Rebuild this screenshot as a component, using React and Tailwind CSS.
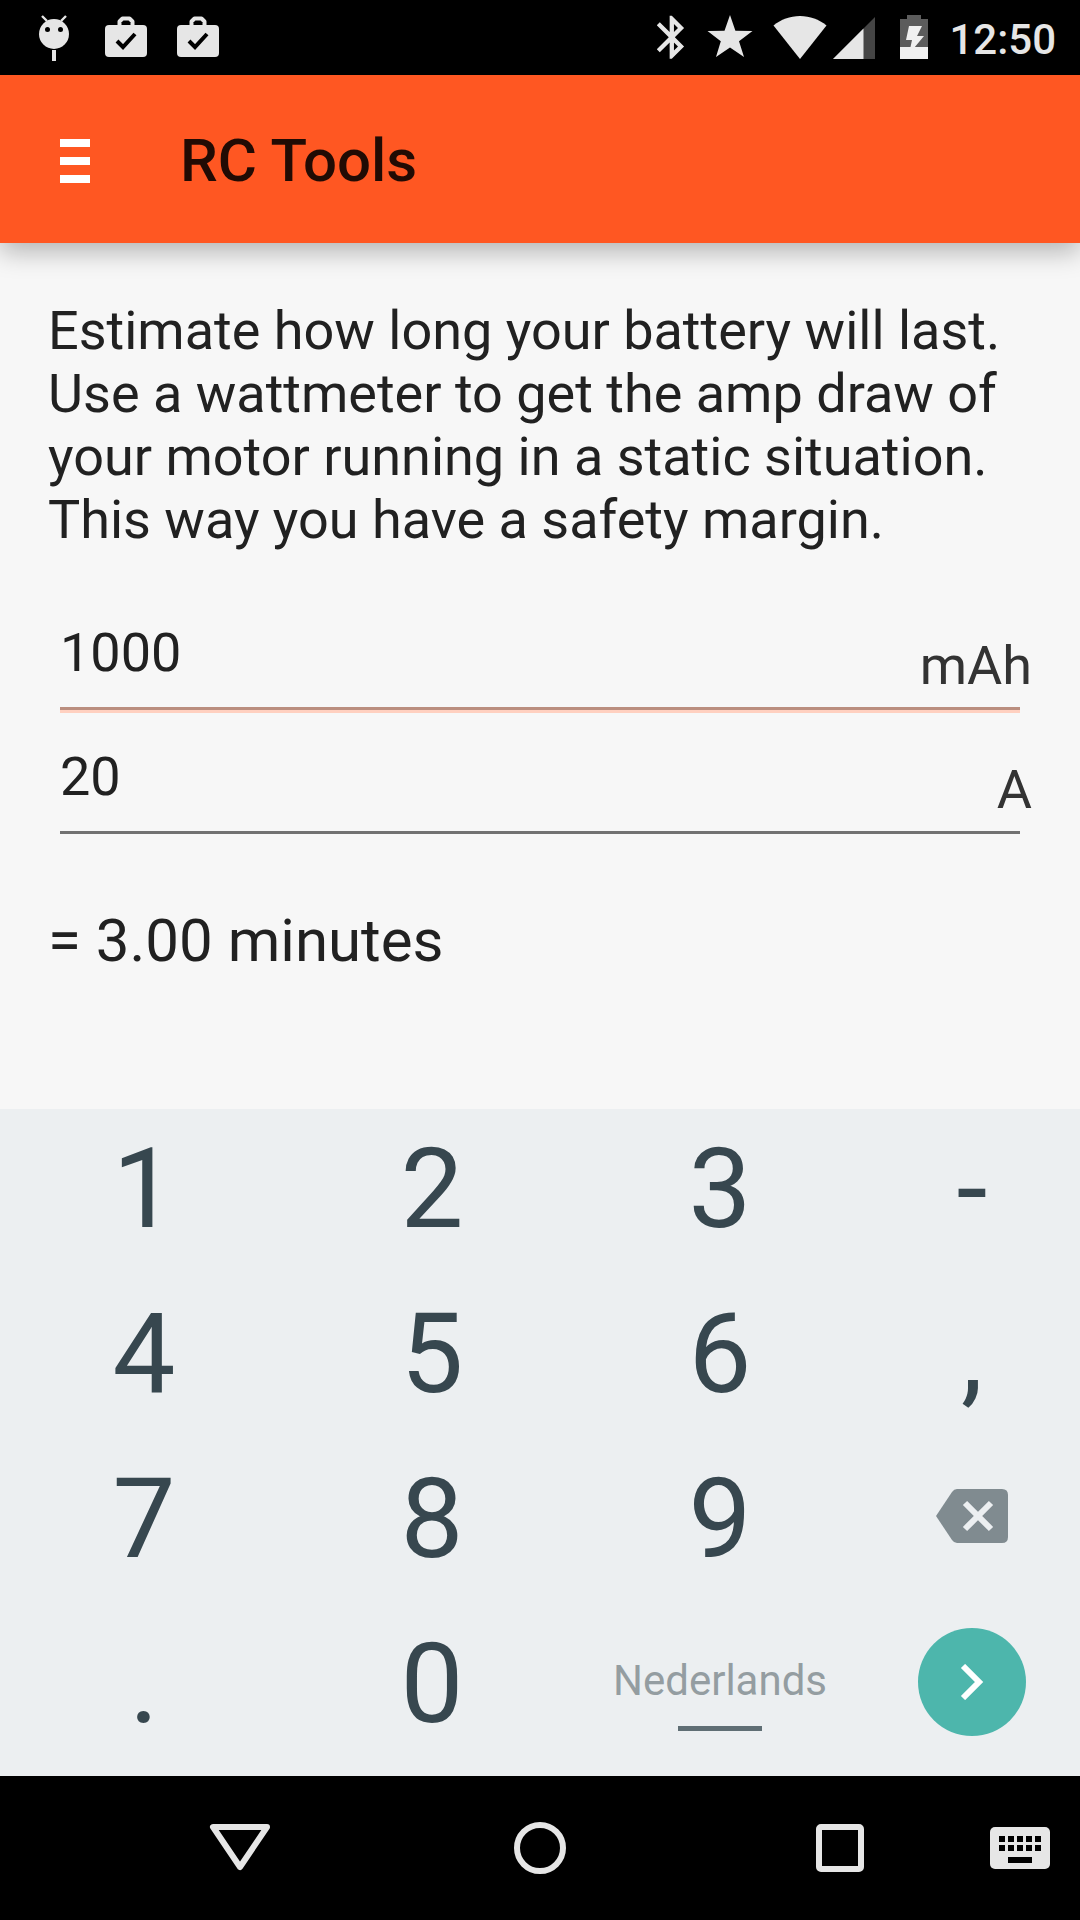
import { useState } from "react";

function AndroidIcon() {
  return (
    <svg width="72" height="75" viewBox="0 0 72 75" fill="#e6e6e6" aria-hidden="true">
      <circle cx="36" cy="34" r="15" />
      <path d="M24 16l5 5M48 16l-5 5" stroke="#e6e6e6" strokeWidth="2.4" />
      <rect x="34" y="50" width="4" height="11" />
      <circle cx="29.5" cy="29.5" r="2.5" fill="#000" />
      <circle cx="42.5" cy="29.5" r="2.5" fill="#000" />
    </svg>
  );
}

function UpdateIcon() {
  return (
    <svg width="72" height="75" viewBox="0 0 72 75" aria-hidden="true">
      <path d="M29.500 26V21.500L32.500 18.500H39.500L42.500 21.500V26" fill="none" stroke="#e6e6e6" strokeWidth="4" strokeLinejoin="round" />
      <rect x="15" y="25" width="42" height="32" rx="4" fill="#e6e6e6" />
      <path d="M27 41l6 6L45 34" fill="none" stroke="#000" strokeWidth="4" />
    </svg>
  );
}

function BluetoothIcon() {
  return (
    <svg width="30" height="75" viewBox="0 0 30 75" aria-hidden="true">
      <path
        transform="translate(-11 11.5) scale(2.15)"
        fill="#e6e6e6"
        d="M17.71 7.71L12 2h-1v7.59L6.410 5 5 6.410 10.590 12 5 17.590 6.410 19 11 14.410V22h1l5.710-5.710-4.300-4.290 4.300-4.290zM13 5.830l1.880 1.880L13 9.590V5.830zm1.880 10.460L13 18.170v-3.760l1.880 1.880z"
      />
    </svg>
  );
}

function StarIcon() {
  return (
    <svg width="46" height="75" viewBox="0 0 46 75" aria-hidden="true">
      <path d="M23 15l5.400 15.800 17.100.2-13.500 10.200L37 57 23 47.500 9 57l4.800-15.800L.500 31l17-.2z" fill="#e6e6e6" />
    </svg>
  );
}

function WifiIcon() {
  return (
    <svg width="54" height="75" viewBox="0 0 54 75" aria-hidden="true">
      <path d="M27 59L.500 25.500C8 19.500 17 16 27 16s19 3.500 26.500 9.500z" fill="#e6e6e6" />
    </svg>
  );
}

function SignalIcon() {
  return (
    <svg width="42" height="75" viewBox="0 0 42 75" aria-hidden="true">
      <path d="M0 59L42 17v42z" fill="#454545" />
      <path d="M0 59l30.500-30.500V59z" fill="#e6e6e6" />
    </svg>
  );
}

function BatteryIcon() {
  return (
    <svg width="30" height="75" viewBox="0 0 30 75" aria-hidden="true">
      <path d="M8 15h14v4h7v40H1V19h7z" fill="#5c5c5c" />
      <path d="M1 47h28v12H1z" fill="#f0f0f0" />
      <path d="M10 26h13l-5 10h7L10 54l3-14H7z" fill="#f0f0f0" />
    </svg>
  );
}

function BackspaceIcon() {
  return (
    <svg width="72" height="54" viewBox="0 0 72 54" aria-hidden="true">
      <path d="M0 27L16 3q2-3 5-3h45q6 0 6 6v42q0 6-6 6H21q-3 0-5-3z" fill="#808b90" />
      <path d="M29 14l26 26M55 14L29 40" stroke="#eceff1" strokeWidth="6" />
    </svg>
  );
}

function KeyboardIcon() {
  return (
    <svg width="60" height="42" viewBox="0 0 60 42" fill="#000" aria-hidden="true">
      <rect width="60" height="42" rx="5" fill="#e6e6e6" />
      {[9, 18, 27, 36, 45].map((x) => (
        <g key={x}>
          <rect x={x} y="9" width="6" height="6" />
          <rect x={x} y="18" width="6" height="6" />
        </g>
      ))}
      <rect x="18" y="30" width="24" height="6" />
    </svg>
  );
}

function StatusBar() {
  return (
    <div className="flex h-[75px] items-center justify-between bg-black pl-[18px] pr-6 text-[#e6e6e6]">
      <div className="flex">
        <AndroidIcon />
        <UpdateIcon />
        <UpdateIcon />
      </div>
      <div className="flex items-center gap-5">
        <div className="flex items-center gap-6">
          <div className="flex items-center gap-5">
            <BluetoothIcon />
            <StarIcon />
            <div className="flex gap-1.5">
              <WifiIcon />
              <SignalIcon />
            </div>
          </div>
          <BatteryIcon />
        </div>
        <span className="pt-1 text-[42px] leading-[50px] font-medium">12:50</span>
      </div>
    </div>
  );
}

function Toolbar() {
  return (
    <header className="z-10 flex h-[168px] items-center gap-[90px] bg-[#ff5722] px-[60px] pt-1 shadow-[0_9px_24px_rgba(0,0,0,0.27)]">
      <button type="button" aria-label="Menu" className="flex w-[30px] flex-col gap-[10px]">
        <span className="h-2 bg-white" />
        <span className="h-2 bg-white" />
        <span className="h-2 bg-white" />
      </button>
      <h1 className="text-[60px] leading-[70px] font-medium text-black/87">RC Tools</h1>
    </header>
  );
}

function UnitField({ id, label, unit, value, onChange, line }) {
  return (
    <div className="relative h-[124px] px-3">
      <input
        id={id}
        type="text"
        inputMode="decimal"
        aria-label={label}
        value={value}
        onChange={(e) => onChange(e.target.value)}
        className={`h-[100px] w-full bg-transparent pb-3 text-[54px] leading-[63px] outline-none ${line}`}
      />
      <label htmlFor={id} className="absolute right-0 top-6 text-[54px] leading-[63px] text-[#333]">
        {unit}
      </label>
    </div>
  );
}

function Key({ value, onPress }) {
  return (
    <button
      type="button"
      onClick={() => onPress(value)}
      className="flex h-[165px] items-center justify-center pb-[5px] text-[112px] leading-[132px] text-[#37474f]"
    >
      {value}
    </button>
  );
}

function Keypad({ onPress, onDelete, onNext }) {
  return (
    <div className="grid grid-cols-[4fr_4fr_4fr_3fr] bg-[#eceff1] pb-[7px]">
      {["1", "2", "3", "-", "4", "5", "6", ",", "7", "8", "9"].map((key) => (
        <Key key={key} value={key} onPress={onPress} />
      ))}
      <button type="button" aria-label="Delete" onClick={onDelete} className="flex h-[165px] items-center justify-center pb-3">
        <BackspaceIcon />
      </button>
      <Key value="." onPress={onPress} />
      <Key value="0" onPress={onPress} />
      <button type="button" className="flex h-[165px] flex-col items-center pt-[52px] text-[42px] leading-[50px] text-[#949da1]">
        Nederlands
        <span className="mt-5 h-[5px] w-[84px] bg-[#5f6e74]" />
      </button>
      <button type="button" aria-label="Next" onClick={onNext} className="flex h-[165px] items-center justify-center pb-[10px]">
        <span className="flex size-[108px] items-center justify-center rounded-full bg-[#4db6ac]">
          <svg width="24" height="36" viewBox="0 0 24 36" fill="none" stroke="#fff" strokeWidth="6" aria-hidden="true">
            <path d="M3 2l16 16L3 34" />
          </svg>
        </span>
      </button>
    </div>
  );
}

function NavBar() {
  return (
    <nav className="grid h-36 grid-cols-[3fr_10fr_10fr_10fr_3fr] bg-black">
      <button type="button" aria-label="Back" className="col-start-2 flex items-center justify-center">
        <svg width="62" height="48" viewBox="0 0 62 48" fill="none" stroke="#e6e6e6" strokeWidth="6" strokeLinejoin="round" aria-hidden="true">
          <path d="M4 3h54L31 43z" />
        </svg>
      </button>
      <button type="button" aria-label="Home" className="flex items-center justify-center">
        <span className="size-[52px] rounded-full border-6 border-[#e6e6e6]" />
      </button>
      <button type="button" aria-label="Recent apps" className="flex items-center justify-center">
        <span className="size-12 rounded-[5px] border-6 border-[#e6e6e6]" />
      </button>
      <button type="button" aria-label="Switch keyboard" className="flex items-center">
        <KeyboardIcon />
      </button>
    </nav>
  );
}

export default function App() {
  const [values, setValues] = useState({ capacity: "1000", current: "20" });
  const [active, setActive] = useState("capacity");

  const setField = (name, value) => setValues((prev) => ({ ...prev, [name]: value }));
  const minutes = ((parseFloat(values.capacity) / 1000 / parseFloat(values.current)) * 60 || 0).toFixed(2);

  return (
    <div className="flex min-h-screen flex-col bg-[#f7f7f7] font-[Roboto,sans-serif] text-[#212121]">
      <StatusBar />
      <Toolbar />
      <main className="flex-1 px-12 pt-14">
        <p className="text-[54px] leading-[63px]">
          Estimate how long your battery will last. Use a wattmeter to get the amp draw of your motor running in a
          static situation. This way you have a safety margin.
        </p>
        <div className="mt-[59px]">
          <UnitField
            id="capacity"
            label="Battery capacity in mAh"
            unit="mAh"
            value={values.capacity}
            onChange={(v) => setField("capacity", v)}
            line="border-b-3 border-[#ba8e7f] shadow-[0_3px_0_#ffd0c0]"
          />
          <UnitField
            id="current"
            label="Current draw in A"
            unit="A"
            value={values.current}
            onChange={(v) => setField("current", v)}
            line="border-b-3 border-[#727272]"
          />
        </div>
        <output htmlFor="capacity current" className="mt-12 block text-[60px] leading-[70px]">
          = {minutes} minutes
        </output>
      </main>
      <Keypad
        onPress={(key) => setField(active, values[active] + key)}
        onDelete={() => setField(active, values[active].slice(0, -1))}
        onNext={() => setActive(active === "capacity" ? "current" : "capacity")}
      />
      <NavBar />
    </div>
  );
}
